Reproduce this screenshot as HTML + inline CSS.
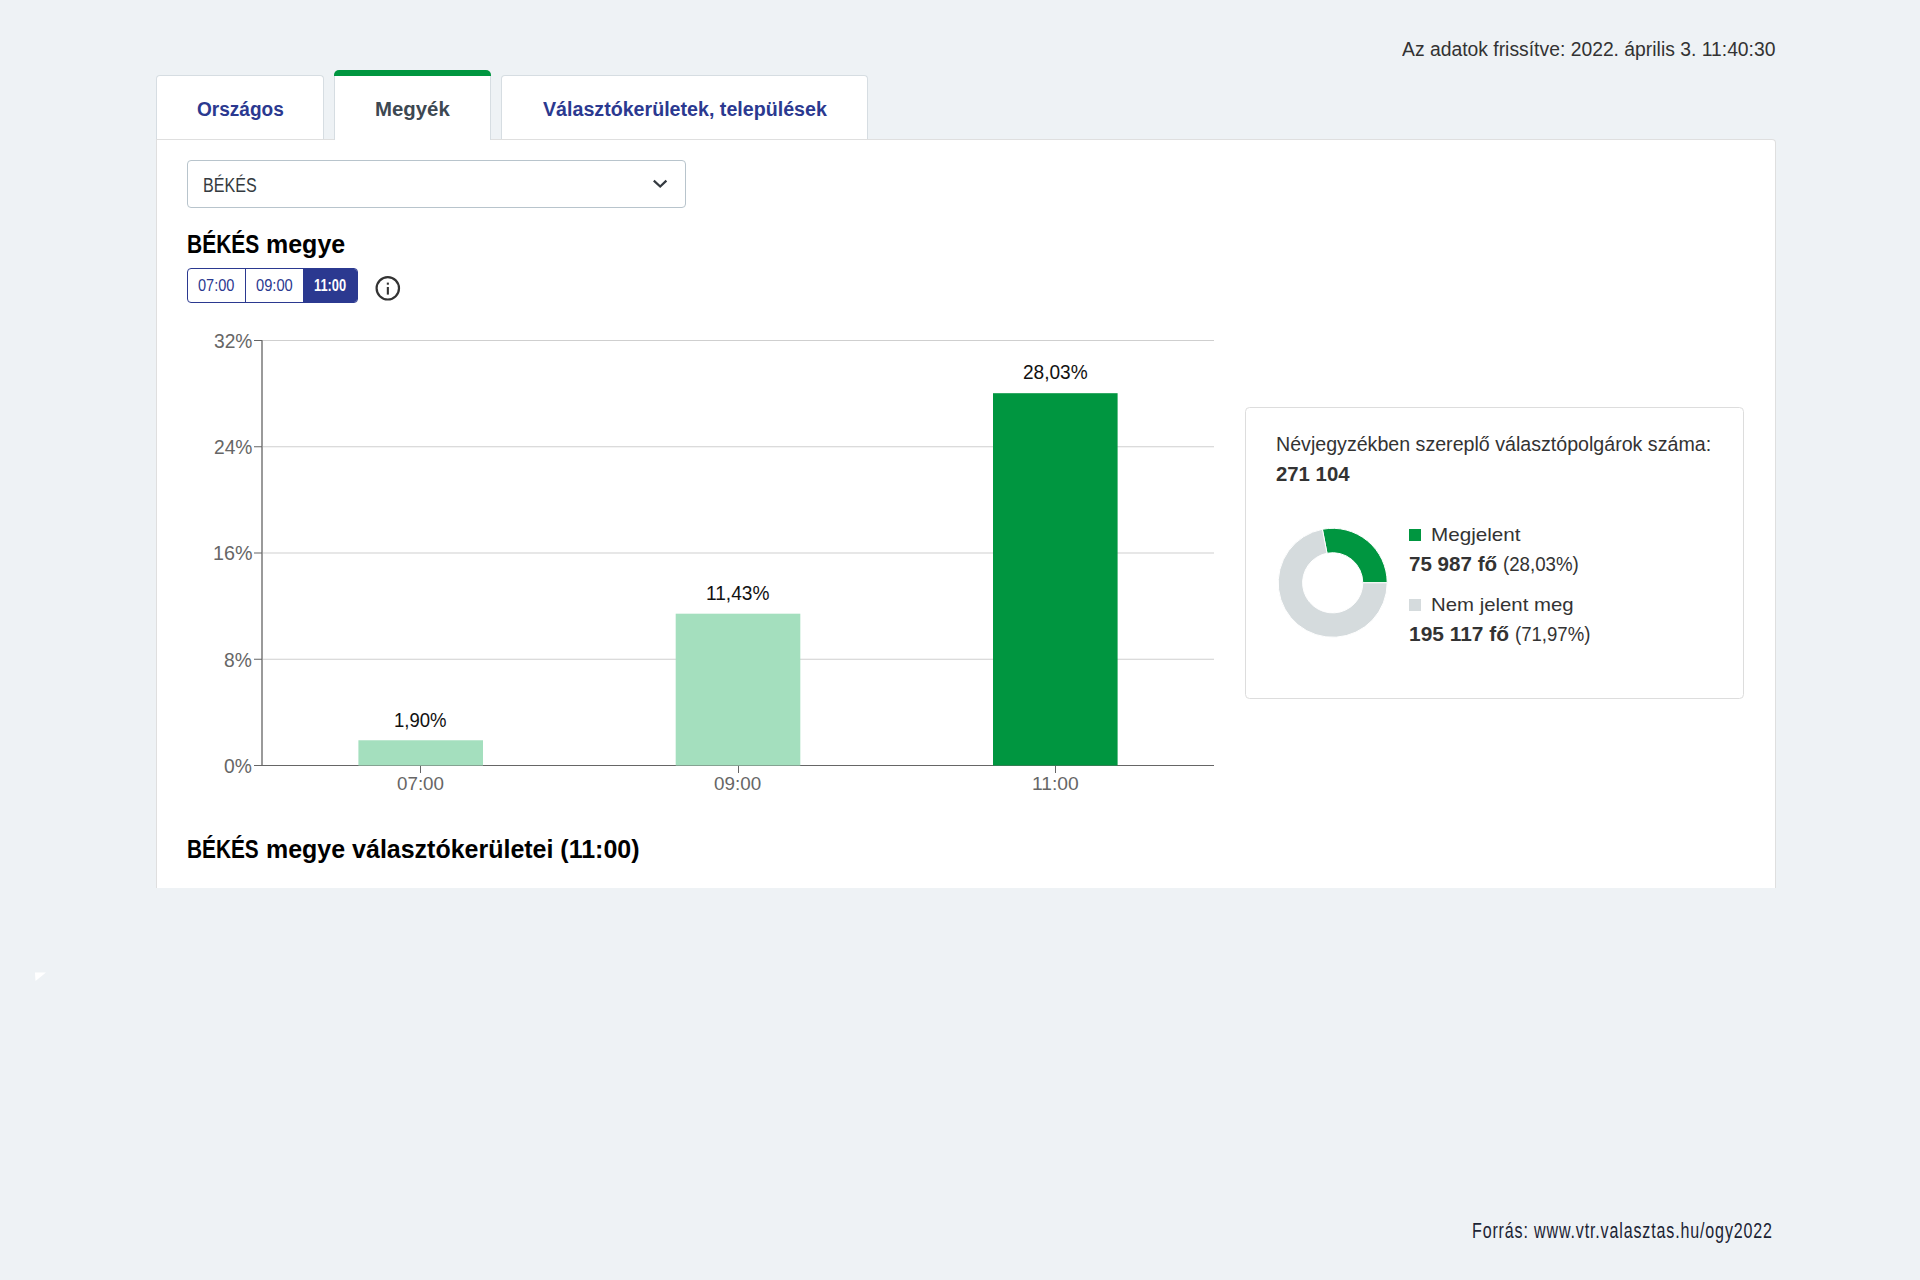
<!DOCTYPE html>
<html><head><meta charset="utf-8"><title>BÉKÉS megye</title>
<style>
html,body{margin:0;padding:0;}
body{width:1920px;height:1280px;background:#eef2f5;position:relative;overflow:hidden;font-family:"Liberation Sans",sans-serif;}
.a{position:absolute;box-sizing:border-box;}
.t{position:absolute;white-space:nowrap;line-height:1;transform-origin:0 0;font-family:"Liberation Sans",sans-serif;}
.t b{font-weight:700;}
</style></head><body>
<!-- tabs -->
<div class="a" style="left:156px;top:75px;width:168px;height:65px;background:#fff;border:1px solid #d6dde2;border-bottom:none;border-radius:4px 4px 0 0;"></div>
<div class="a" style="left:501px;top:75px;width:367px;height:65px;background:#fff;border:1px solid #d6dde2;border-bottom:none;border-radius:4px 4px 0 0;"></div>
<!-- panel -->
<div class="a" style="left:156px;top:139px;width:1620px;height:749px;background:#fff;border:1px solid #dfdfdf;border-bottom:none;border-radius:0 4px 0 0;"></div>
<!-- active tab -->
<div class="a" style="left:334px;top:70px;width:157px;height:70px;background:#fff;border:1px solid #d6dde2;border-top:none;border-bottom:none;border-radius:5px 5px 0 0;"></div>
<div class="a" style="left:334px;top:70px;width:157px;height:6px;background:#009640;border-radius:5px 5px 0 0;"></div>
<!-- select -->
<div class="a" style="left:187px;top:160px;width:499px;height:48px;background:#fff;border:1px solid #b8c4cc;border-radius:4px;"></div>
<svg class="a" style="left:0;top:0" width="1920" height="1280" viewBox="0 0 1920 1280">
 <polyline points="653.8,180.6 660.2,186.6 666.4,180.6" fill="none" stroke="#343a40" stroke-width="2.2"/>
 <!-- info icon -->
 <circle cx="387.8" cy="288.3" r="11.2" fill="none" stroke="#333" stroke-width="2.2"/>
 <rect x="386.8" y="287" width="2.1" height="7.6" fill="#333"/>
 <rect x="386.8" y="282.6" width="2.1" height="2.1" fill="#333"/>
 <!-- grid -->
 <g fill="#cfcfcf">
  <rect x="262" y="340" width="952" height="1"/>
  <rect x="262" y="446.25" width="952" height="1"/>
  <rect x="262" y="552.5" width="952" height="1"/>
  <rect x="262" y="658.75" width="952" height="1"/>
 </g>
 <!-- axes -->
 <rect x="261" y="340" width="2" height="426" fill="#9a9a9a"/>
 <g fill="#666">
  <rect x="254" y="340" width="8" height="1"/>
  <rect x="254" y="446.25" width="8" height="1"/>
  <rect x="254" y="552.5" width="8" height="1"/>
  <rect x="254" y="658.75" width="8" height="1"/>
  <rect x="420" y="766" width="1" height="7"/>
  <rect x="738" y="766" width="1" height="7"/>
  <rect x="1055" y="766" width="1" height="7"/>
 </g>
 <rect x="254" y="765" width="960" height="1" fill="#666"/>
 <!-- bars -->
 <rect x="358.4" y="740.27" width="124.6" height="25.23" fill="#a4dfbe"/>
 <rect x="675.7" y="613.7" width="124.6" height="151.8" fill="#a4dfbe"/>
 <rect x="993.0" y="393.2" width="124.6" height="372.3" fill="#009640"/>
 <!-- card -->
 <rect x="1245.5" y="407.5" width="498" height="291" rx="4" ry="4" fill="#fff" stroke="#dddddd" stroke-width="1"/>
 <path d="M1322.39,529.28 A54.5,54.5 0 0 1 1387.20,582.80 L1362.80,582.80 A30.1,30.1 0 0 0 1327.01,553.24 Z" fill="#009640" stroke="#fff" stroke-width="1"/>
 <path d="M1387.20,582.80 A54.5,54.5 0 1 1 1322.39,529.28 L1327.01,553.24 A30.1,30.1 0 1 0 1362.80,582.80 Z" fill="#d5dbdd" stroke="#fff" stroke-width="1"/>
 <rect x="1409" y="529" width="12" height="12" fill="#009640"/>
 <rect x="1409" y="599" width="12" height="12" fill="#d5dbdd"/>
 <!-- tiny triangle -->
 <polygon points="35,972.5 46,972.5 35.5,981" fill="#fff"/>
</svg>
<!-- button group -->
<div class="a" style="left:187px;top:268px;width:171px;height:35px;border:1px solid #2b3990;border-radius:4px;background:#fff;overflow:hidden;">
 <div class="a" style="left:57px;top:0;width:1px;height:33px;background:#2b3990;"></div>
 <div class="a" style="left:115px;top:0;width:55px;height:33px;background:#2b3990;"></div>
</div>
<div class="t" style="left:1402.0px;top:38.8px;font-size:20.0px;letter-spacing:0px;font-weight:400;color:#333;transform:scaleX(0.9663)">Az adatok frissítve: 2022. április 3. 11:40:30</div>
<div class="t" style="left:196.65px;top:98.8px;font-size:20.0px;letter-spacing:0px;font-weight:700;color:#2b3990;transform:scaleX(0.9528)">Országos</div>
<div class="t" style="left:375.48px;top:98.8px;font-size:20.0px;letter-spacing:0px;font-weight:700;color:#3d4852;transform:scaleX(1.0194)">Megyék</div>
<div class="t" style="left:542.8px;top:98.8px;font-size:20.0px;letter-spacing:0px;font-weight:700;color:#2b3990;transform:scaleX(0.982)">Választókerületek, települések</div>
<div class="t" style="left:202.83px;top:174.9px;font-size:20.5px;letter-spacing:0px;font-weight:400;color:#343a40;transform:scaleX(0.7848)">BÉKÉS</div>
<div class="t" style="left:186.78px;top:230.6px;font-size:26.0px;letter-spacing:0px;font-weight:700;color:#000;transform:scaleX(0.808)">BÉKÉS</div>
<div class="t" style="left:265.68px;top:230.6px;font-size:26.0px;letter-spacing:0px;font-weight:700;color:#000;transform:scaleX(0.9612)">megye</div>
<div class="t" style="left:197.59px;top:277.75px;font-size:16px;letter-spacing:0px;font-weight:400;color:#2b3990;transform:scaleX(0.9103)">07:00</div>
<div class="t" style="left:255.68px;top:277.75px;font-size:16px;letter-spacing:0px;font-weight:400;color:#2b3990;transform:scaleX(0.9179)">09:00</div>
<div class="t" style="left:314.2px;top:278.0px;font-size:16px;letter-spacing:0px;font-weight:700;color:#fff;transform:scaleX(0.8013)">11:00</div>
<div class="t" style="left:213.84px;top:330.8px;font-size:20.0px;letter-spacing:0px;font-weight:400;color:#666;transform:scaleX(0.9605)">32%</div>
<div class="t" style="left:213.84px;top:437.05px;font-size:20.0px;letter-spacing:0px;font-weight:400;color:#666;transform:scaleX(0.9605)">24%</div>
<div class="t" style="left:212.83px;top:543.3px;font-size:20.0px;letter-spacing:0px;font-weight:400;color:#666;transform:scaleX(0.9865)">16%</div>
<div class="t" style="left:224.24px;top:649.55px;font-size:20.0px;letter-spacing:0px;font-weight:400;color:#666;transform:scaleX(0.963)">8%</div>
<div class="t" style="left:224.24px;top:755.9px;font-size:20.0px;letter-spacing:0px;font-weight:400;color:#666;transform:scaleX(0.963)">0%</div>
<div class="t" style="left:394.2px;top:711.0px;font-size:19.5px;letter-spacing:0px;font-weight:400;color:#111;transform:scaleX(0.9509)">1,90%</div>
<div class="t" style="left:705.89px;top:583.0px;font-size:20.0px;letter-spacing:0px;font-weight:400;color:#111;transform:scaleX(0.9563)">11,43%</div>
<div class="t" style="left:1023.02px;top:362.75px;font-size:19.5px;letter-spacing:0px;font-weight:400;color:#111;transform:scaleX(0.9781)">28,03%</div>
<div class="t" style="left:396.68px;top:774.8px;font-size:18.5px;letter-spacing:0px;font-weight:400;color:#666;transform:scaleX(1.0156)">07:00</div>
<div class="t" style="left:713.58px;top:774.8px;font-size:18.5px;letter-spacing:0px;font-weight:400;color:#666;transform:scaleX(1.0178)">09:00</div>
<div class="t" style="left:1032.26px;top:774.8px;font-size:18.5px;letter-spacing:0px;font-weight:400;color:#666;transform:scaleX(1.0419)">11:00</div>
<div class="t" style="left:1275.79px;top:433.7px;font-size:20.5px;letter-spacing:0px;font-weight:400;color:#333;transform:scaleX(0.957)">Névjegyzékben szereplő választópolgárok száma:</div>
<div class="t" style="left:1276.06px;top:464.8px;font-size:19.5px;letter-spacing:0px;font-weight:700;color:#333;transform:scaleX(1.0429)">271 104</div>
<div class="t" style="left:1430.53px;top:524.8px;font-size:19.0px;letter-spacing:0px;font-weight:400;color:#333;transform:scaleX(1.0875)">Megjelent</div>
<div class="t" style="left:1408.95px;top:554.9px;font-size:19.5px;letter-spacing:0px;font-weight:700;color:#333;transform:scaleX(1.0549)">75 987 fő</div>
<div class="t" style="left:1502.94px;top:554.9px;font-size:19.5px;letter-spacing:0px;font-weight:400;color:#333;transform:scaleX(0.9584)">(28,03%)</div>
<div class="t" style="left:1430.56px;top:595.2px;font-size:19.0px;letter-spacing:0px;font-weight:400;color:#333;transform:scaleX(1.0715)">Nem jelent meg</div>
<div class="t" style="left:1409.43px;top:625.0px;font-size:19.5px;letter-spacing:0px;font-weight:700;color:#333;transform:scaleX(1.0725)">195 117 fő</div>
<div class="t" style="left:1514.55px;top:625.0px;font-size:19.5px;letter-spacing:0px;font-weight:400;color:#333;transform:scaleX(0.9519)">(71,97%)</div>
<div class="t" style="left:187.3px;top:835.9px;font-size:26.0px;letter-spacing:0px;font-weight:700;color:#000;transform:scaleX(0.8011)">BÉKÉS</div>
<div class="t" style="left:266.08px;top:835.9px;font-size:26.0px;letter-spacing:0px;font-weight:700;color:#000;transform:scaleX(0.9608)">megye választókerületei (11:00)</div>
<div class="t" style="left:1472.37px;top:1219.5px;font-size:22.5px;letter-spacing:1.2px;font-weight:400;color:#1c2434;transform:scaleX(0.7127)">Forrás: www.vtr.valasztas.hu/ogy2022</div>
</body></html>
